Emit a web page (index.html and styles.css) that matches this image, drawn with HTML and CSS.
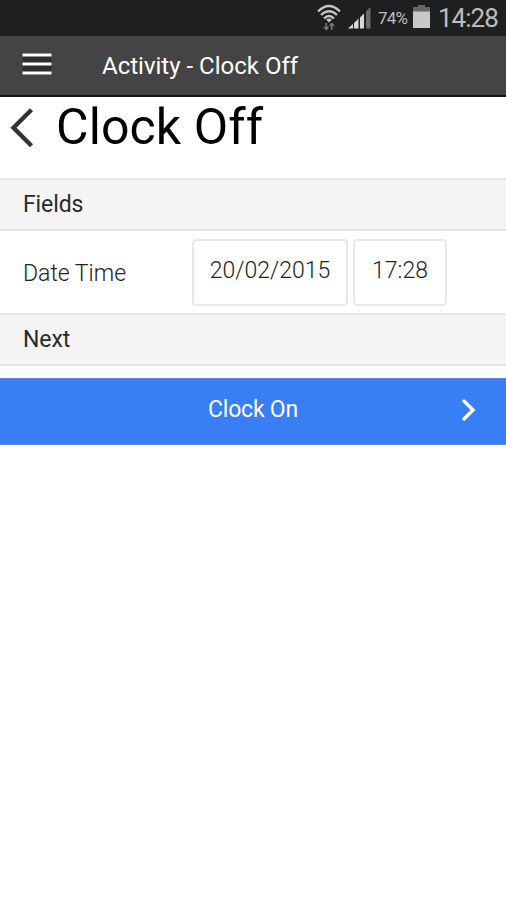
FILE: index.html
```html
<!DOCTYPE html>
<html lang="en">
<head>
    <meta charset="UTF-8">
    <meta name="viewport" content="width=device-width, initial-scale=1.0">
    <title>Activity - Clock Off</title>
    <link rel="stylesheet" href="styles.css">
</head>
<body>
    <div class="statusbar">
        <svg class="wifi" width="24" height="28" viewBox="0 0 24 28">
            <g fill="none" stroke="#c4c4c4" stroke-width="2.300">
                <path d="M1 7.500Q12 -3.500 23 7.500"/>
                <path d="M4 11Q12 3.500 20 11"/>
                <path d="M7 14.500Q12 9.500 17 14.500"/>
            </g>
            <path d="M9 15.500Q12 13.500 15 15.500L12 18.500Z" fill="#c4c4c4"/>
            <path d="M9.300 26V19M7 23L9.300 25.500L11.300 23M14.700 19V26M12.700 22L14.700 19.500L17 22" fill="none" stroke="#777" stroke-width="1.700"/>
        </svg>
        <svg class="signal" width="24" height="24" viewBox="0 0 24 24">
            <path d="M0 22.500L5 18V22.500ZM6 17L10.500 12.500V22.500H6ZM12 11.500L16 7.500V22.500H12Z" fill="#d8d8d8"/>
            <path d="M18 5.500L22.500 1V22.500H18Z" fill="#6b6b6b"/>
        </svg>
        <span class="percent">74%</span>
        <svg class="battery" width="17" height="24" viewBox="0 0 17 24">
            <path d="M5 0H12V2H17V7H0V2H5Z" fill="#666"/>
            <path d="M0 6.500H17V23H0Z" fill="#c8c8c8"/>
        </svg>
        <span class="time">14:28</span>
    </div>
    <header>
        <svg class="menu" width="30" height="24" viewBox="0 0 30 24">
            <path d="M0.500 1H29.500V23H0.500Z" fill="#2e2e2e"/>
            <path d="M0.500 3H29.500M0.500 12H29.500M0.500 21H29.500" stroke="#fff" stroke-width="3"/>
        </svg>
        <span class="header-title">Activity - Clock Off</span>
    </header>
    <div class="page-title">
        <svg class="back" width="24" height="40" viewBox="0 0 24 40">
            <path d="M21.500 1.800L3.500 19.800L21.500 37.800" fill="none" stroke="#333" stroke-width="4.400"/>
        </svg>
        <h1>Clock Off</h1>
    </div>
    <h2 class="divider">Fields</h2>
    <div class="field">
        <label class="field-label">Date Time</label>
        <div class="box date">20/02/2015</div>
        <div class="box hour">17:28</div>
    </div>
    <h2 class="divider">Next</h2>
    <button class="clock-btn">
        <span class="btn-text">Clock On</span>
        <svg class="arrow" width="14" height="22" viewBox="0 0 14 22">
            <path d="M2 2L11 11L2 20" fill="none" stroke="#fff" stroke-width="3.400" stroke-linecap="round"/>
        </svg>
    </button>
</body>
</html>
```
FILE: styles.css
```css
body {
    font-family: Roboto, 'Liberation Sans', sans-serif;
    margin: 0;
    padding: 0;
    background-color: #fff;
    color: #333;
    font-size: 23px;
}
svg {
    display: block;
    flex: none;
}
.statusbar {
    display: flex;
    align-items: flex-start;
    box-sizing: border-box;
    height: 36px;
    padding: 0 8px 0 0;
    justify-content: flex-end;
    background-color: #1f1f1f;
    color: #bdbdbd;
}
.wifi {
    margin: 4px 7px 0 0;
}
.signal {
    margin: 6px 6px 0 0;
}
.percent {
    width: 31px;
    margin-right: 4px;
    font-size: 17px;
    line-height: 37px;
    letter-spacing: -0.8px;
    white-space: nowrap;
}
.battery {
    margin: 5px 8px 0 0;
}
.time {
    width: 60px;
    font-size: 26px;
    line-height: 36px;
    letter-spacing: -1px;
    white-space: nowrap;
}
header {
    display: flex;
    align-items: flex-start;
    box-sizing: border-box;
    height: 61px;
    padding-left: 22px;
    background-color: #444;
    border-bottom: 2px solid #111;
    color: #fff;
}
.menu {
    margin: 16px 50px 0 0;
}
.header-title {
    font-size: 24px;
    line-height: 60px;
}
.page-title {
    display: flex;
    height: 81px;
    padding-left: 10px;
}
.back {
    margin: 11px 22px 0 0;
}
h1 {
    margin: 0;
    font-size: 50px;
    font-weight: 400;
    line-height: 60px;
    letter-spacing: 0.1px;
    color: #000;
}
.divider {
    box-sizing: border-box;
    height: 53px;
    margin: 0;
    padding-left: 23px;
    background-color: #f4f4f4;
    border-top: 2px solid #e8e8e8;
    border-bottom: 2px solid #e4e4e4;
    font-size: 23px;
    font-weight: 400;
    line-height: 49px;
    letter-spacing: -0.1px;
    color: #2a2a2a;
}
.field {
    display: flex;
    box-sizing: border-box;
    height: 82px;
    padding: 8px 0 0 23px;
}
.field-label {
    width: 169px;
    font-weight: 300;
    line-height: 69px;
    color: #222;
}
.box {
    box-sizing: border-box;
    height: 67px;
    margin-right: 5px;
    border: 2px solid #e8e8e8;
    border-radius: 4px;
    font-weight: 300;
    line-height: 59px;
    text-align: center;
    color: #222;
}
.date {
    width: 156px;
}
.hour {
    width: 94px;
}
.clock-btn {
    display: flex;
    box-sizing: border-box;
    width: 100%;
    height: 67px;
    margin-top: 12px;
    padding: 0 30px 0 44px;
    border: 1px solid #5a8af0;
    border-width: 1px 0;
    background-color: #387ef5;
    color: #fff;
    font-family: inherit;
    font-size: 23px;
    letter-spacing: -0.2px;
    cursor: pointer;
}
.btn-text {
    flex: 1;
    line-height: 61px;
}
.arrow {
    margin-top: 20px;
}
```
